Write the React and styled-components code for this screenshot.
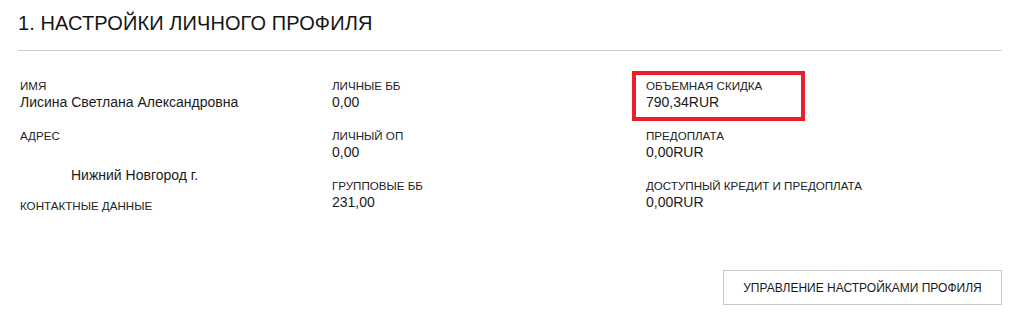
import React from 'react';
import styled, { createGlobalStyle } from 'styled-components';

const GlobalStyle = createGlobalStyle`
  body {
    margin: 0;
    background: #fff;
    font-family: "Liberation Sans", Arial, sans-serif;
    color: #1a1a1a;
  }
`;

const Page = styled.div`
  width: 1018px;
  height: 328px;
  padding: 0 16px 0 18px;
  box-sizing: border-box;
`;

const Header = styled.div`
  height: 51px;
  border-bottom: 1px solid #cfcfcf;
  box-sizing: border-box;
  padding-top: 11px;
`;

const Title = styled.h1`
  margin: 0;
  font-size: 20px;
  line-height: 24px;
  font-weight: normal;
  letter-spacing: 0.1px;
  color: #151515;
`;

const Grid = styled.div`
  display: grid;
  grid-template-columns: 312px 314px 1fr;
  padding: 28px 0 0 2px;
`;

const Column = styled.div`
  display: flex;
  flex-direction: column;
`;

const Field = styled.div`
  margin-bottom: ${p => (p.last ? 0 : '18px')};
`;

const Label = styled.div`
  font-size: 11.6px;
  line-height: 14px;
  text-transform: uppercase;
  color: #222;
`;

const Value = styled.div`
  font-size: 14px;
  line-height: 18px;
  color: #1a1a1a;
`;

const Address = styled.div`
  font-size: 14px;
  line-height: 18px;
  padding: 23px 0 0 51px;
  margin-bottom: 15px;
`;

// red annotation frame around the discount block
const Highlight = styled.div`
  border: 4px solid #ea1f2a;
  margin: -8px 0 8px -14px;
  padding: 4px 0 6px 10px;
  width: 155px;
`;

const Footer = styled.div`
  display: flex;
  justify-content: flex-end;
  margin-top: 57px;
`;

const Button = styled.button`
  width: 279px;
  height: 35px;
  background: #fff;
  border: 1px solid #c8c8c8;
  font-family: inherit;
  font-size: 12px;
  color: #1a1a1a;
  text-transform: uppercase;
  cursor: pointer;
  padding: 0;
`;

const App = () => (
  <Page>
    <GlobalStyle />
    <Header>
      <Title>1. НАСТРОЙКИ ЛИЧНОГО ПРОФИЛЯ</Title>
    </Header>
    <Grid>
      <Column>
        <Field>
          <Label>Имя</Label>
          <Value>Лисина Светлана Александровна</Value>
        </Field>
        <Label>Адрес</Label>
        <Address>Нижний Новгород г.</Address>
        <Label>Контактные данные</Label>
      </Column>
      <Column>
        <Field>
          <Label>Личные ББ</Label>
          <Value>0,00</Value>
        </Field>
        <Field>
          <Label>Личный ОП</Label>
          <Value>0,00</Value>
        </Field>
        <Field last>
          <Label>Групповые ББ</Label>
          <Value>231,00</Value>
        </Field>
      </Column>
      <Column>
        <Highlight>
          <Label>Объемная скидка</Label>
          <Value>790,34RUR</Value>
        </Highlight>
        <Field>
          <Label>Предоплата</Label>
          <Value>0,00RUR</Value>
        </Field>
        <Field last>
          <Label>Доступный кредит и предоплата</Label>
          <Value>0,00RUR</Value>
        </Field>
      </Column>
    </Grid>
    <Footer>
      <Button>Управление настройками профиля</Button>
    </Footer>
  </Page>
);

export default App;
